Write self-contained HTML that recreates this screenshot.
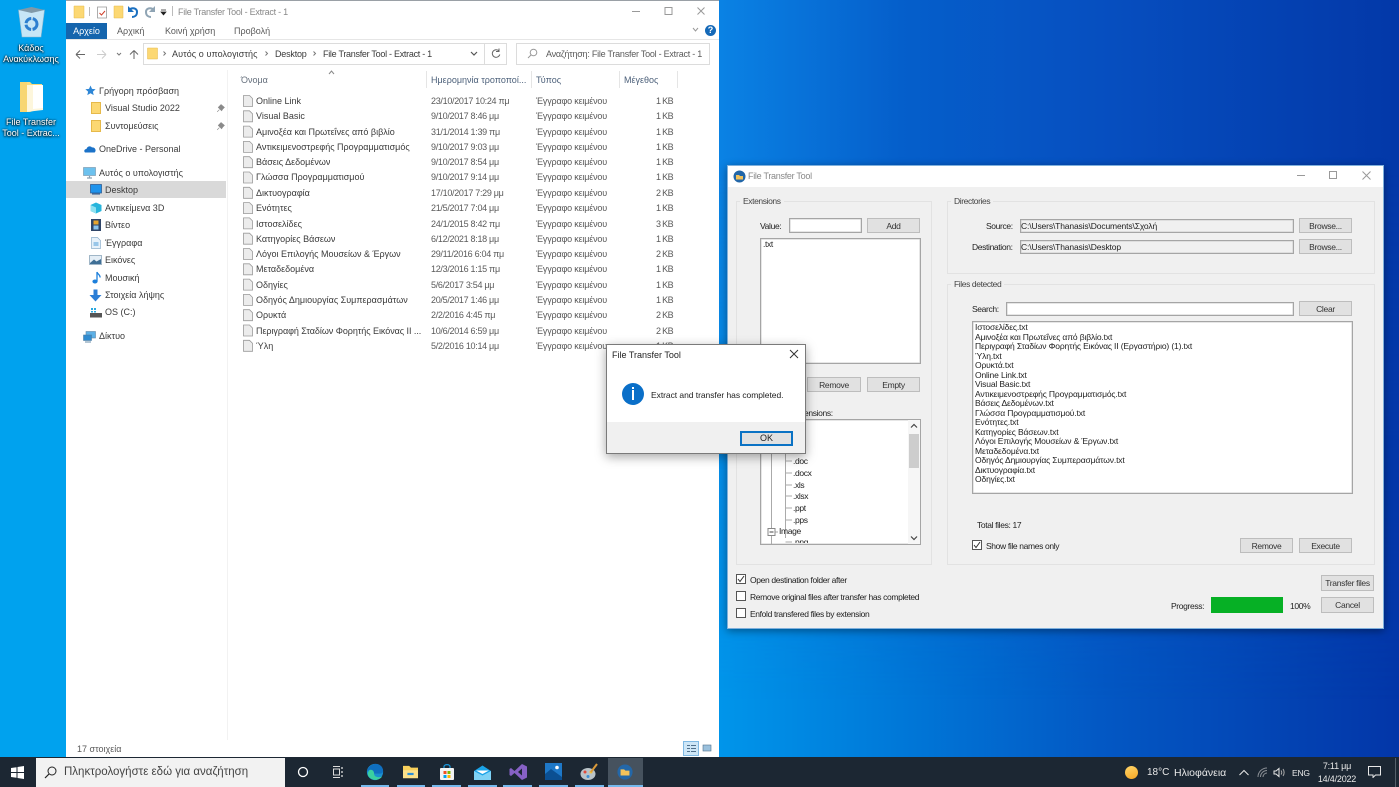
<!DOCTYPE html>
<html lang="el"><head><meta charset="utf-8"><title>File Transfer Tool</title>
<style>
*{box-sizing:border-box}
html{background:#0a5ac8}
html,body{margin:0;padding:0;width:1399px;height:787px;overflow:hidden}
body{position:relative;font-family:"Liberation Sans","Noto Sans CJK JP",sans-serif;font-size:9px;color:#3a3a3a;filter:blur(.3px)}
.a,.t,svg{position:absolute}
.t{white-space:nowrap;line-height:12px;height:12px}
#bg{left:0;top:0;width:1399px;height:787px;background:linear-gradient(90deg,#0098ec 0,#0095ea 720px,#0078d8 900px,#0358c4 1100px,#0336a8 1399px)}
#bg2{left:0;top:0;width:1399px;height:787px;background:linear-gradient(90deg,#0a82e4 720px,#055fcb 900px,#064fc0 1100px,#0338a8 1399px);-webkit-mask-image:linear-gradient(180deg,#000 0,#000 170px,transparent 700px);mask-image:linear-gradient(180deg,#000 0,#000 170px,transparent 700px)}
#bl{left:0;top:0;width:66px;height:757px;background:#00a2ee}
.g{color:#5a5a5a}
.g[style*="left:431"]{letter-spacing:-.3px}
.g[style*="left:536"]{letter-spacing:-.18px}
.g[style*="left:656"]{letter-spacing:-.45px;word-spacing:-.5px}
.b{background:#e1e1e1;border:1px solid #bdbdbd;text-align:center;color:#333;line-height:14px;font-size:8.500px;letter-spacing:-.3px}
.i{background:#fff;border:1px solid #a5a5a5;box-shadow:inset 0 0 0 .5px #ccc}
.gb{border:1px solid #e2e2e2}
.lg{background:#f0f0f0;padding:0 3px;color:#444;font-size:8.500px;letter-spacing:-.4px}
.cb{width:10px;height:10px;border:1px solid #555;background:#fff}
.d{color:#222;font-size:8.500px;letter-spacing:-.36px}
.l{letter-spacing:-.14px}
</style></head><body>
<div class="a" id="bg"></div>
<div class="a" id="bg2"></div>
<div class="a" id="bl"></div>

<!-- Desktop icons -->
<svg style="left:17px;top:6px" width="29" height="32" viewBox="0 0 29 32"><path d="M1.500 4 L27.500 4 L24 31 L5 31Z" fill="#c6e6f6" stroke="#8fb8d0" stroke-width=".6"/><path d="M1.500 4 L14.500 1 L27.500 4 L14.500 7Z" fill="#7f99a8"/><circle cx="14.500" cy="18" r="5.500" fill="none" stroke="#2d7fd0" stroke-width="3" stroke-dasharray="7.500 1.500"/></svg>
<div class="t" style="left:0;width:62px;top:43px;text-align:center;color:#fff;text-shadow:0 1px 2px #000,0 0 2px #000;line-height:11px;height:24px;white-space:normal;font-size:9px">Κάδος Ανακύκλωσης</div>
<svg style="left:19px;top:81px" width="25" height="32" viewBox="0 0 25 32"><path d="M1 1H11L13 3H23V27L11 31H1Z" fill="#f8dc82"/><path d="M7 4H24V29L7 31Z" fill="#fdf6dc"/><path d="M14 4H24V27L14 28Z" fill="#fff"/><path d="M1 1H8V31H1Z" fill="#f7d672"/></svg>
<div class="t" style="left:0;width:62px;top:117px;text-align:center;color:#fff;text-shadow:0 1px 2px #000,0 0 2px #000;line-height:10.500px;height:24px;white-space:normal;font-size:9px">File Transfer Tool - Extrac...</div>

<!-- Explorer window -->
<div class="a" style="left:66px;top:0;width:653px;height:757px;background:#fff"></div>
<div class="a" style="left:66px;top:0;width:653px;height:1px;background:#9aa0a6"></div>
<svg style="left:73px;top:5px" width="12" height="14" viewBox="0 0 12 14"><path d="M1 1H11V13H1Z" fill="#fcd873" stroke="#e6b94a" stroke-width=".5"/></svg>
<div class="a" style="left:89px;top:7px;width:1px;height:9px;background:#bbb"></div>
<svg style="left:96px;top:5px" width="12" height="14" viewBox="0 0 12 14"><path d="M1.500 2H10.500V13H1.500Z" fill="#fff" stroke="#999" stroke-width=".8"/><path d="M3.500 8l2 2 3.500-4" stroke="#d0402c" fill="none"/></svg>
<svg style="left:113px;top:5px" width="11" height="14" viewBox="0 0 11 14"><path d="M1 1H10V13H1Z" fill="#fcd873" stroke="#e6b94a" stroke-width=".5"/></svg>
<svg style="left:127px;top:5px" width="12" height="13" viewBox="0 0 12 13"><path d="M2 5c3-3 8-2 8 2s-3 5-5 5" stroke="#1a6fc0" stroke-width="2" fill="none"/><path d="M1 1v6h6" fill="#1a6fc0"/></svg>
<svg style="left:144px;top:5px" width="12" height="13" viewBox="0 0 12 13"><path d="M10 5C7 2 2 3 2 7s3 5 5 5" stroke="#8fa4b4" stroke-width="2" fill="none"/><path d="M11 1v6H5" fill="#8fa4b4"/></svg>
<svg style="left:160px;top:9px" width="7" height="7" viewBox="0 0 7 7"><path d="M1 1H6M1 3L3.500 6L6 3Z" stroke="#222" fill="#222" stroke-width=".7"/></svg>
<div class="a" style="left:172px;top:6px;width:1px;height:10px;background:#bbb"></div>
<div class="t" style="left:178px;top:6px;color:#888;letter-spacing:-.25px">File Transfer Tool - Extract - 1</div>
<svg style="left:632px;top:6px" width="76" height="11" viewBox="0 0 76 11"><path d="M0 5.500H8" stroke="#999"/><rect x="33" y="1.500" width="7" height="7" fill="none" stroke="#999"/><path d="M65.500 1.500l7 7m0-7l-7 7" stroke="#999"/></svg>

<!-- Ribbon -->
<div class="a" style="left:66px;top:23px;width:41px;height:16px;background:#1565ad;color:#fff;text-align:center;line-height:16px">Αρχείο</div>
<div class="t g" style="left:117px;top:25px">Αρχική</div>
<div class="t g" style="left:165px;top:25px">Κοινή χρήση</div>
<div class="t g" style="left:234px;top:25px">Προβολή</div>
<div class="a" style="left:66px;top:39px;width:653px;height:1px;background:#e6e6e6"></div>
<svg style="left:692px;top:27px" width="7" height="6" viewBox="0 0 7 6"><path d="M1 1l2.500 3L6 1" stroke="#999" fill="none"/></svg>
<div class="a" style="left:705px;top:25px;width:11px;height:11px;border-radius:50%;background:#1569b8;color:#fff;font:bold 9px/11px 'Liberation Sans',sans-serif;text-align:center">?</div>

<!-- Nav bar -->
<svg style="left:75px;top:49px" width="66" height="11" viewBox="0 0 66 11"><path d="M1 5.500H10M1 5.500l4-4M1 5.500l4 4" stroke="#666" fill="none"/><path d="M31 5.500H22M31 5.500l-4-4M31 5.500l-4 4" stroke="#ccc" fill="none"/><path d="M42 4l2 2 2-2" stroke="#777" fill="none"/><path d="M59 10V1.500M59 1.500l-4 4M59 1.500l4 4" stroke="#666" fill="none"/></svg>
<div class="a" style="left:143px;top:43px;width:364px;height:22px;border:1px solid #dcdcdc"></div>
<div class="a" style="left:484px;top:43px;width:1px;height:22px;background:#dcdcdc"></div>
<svg style="left:147px;top:47px" width="11" height="13" viewBox="0 0 11 13"><path d="M.5 1H10.500V12H.5Z" fill="#fcd873" stroke="#e6b94a" stroke-width=".5"/></svg>
<svg style="left:163px;top:51px" width="110" height="6" viewBox="0 0 110 6"><path d="M.5 .5l2 2-2 2M102.500 .5l2 2-2 2" stroke="#777" fill="none"/></svg>
<svg style="left:313px;top:51px" width="4" height="6" viewBox="0 0 4 6"><path d="M.5 .5l2 2-2 2" stroke="#777" fill="none"/></svg>
<div class="t" style="left:172px;top:48px;letter-spacing:.08px">Αυτός ο υπολογιστής</div>
<div class="t" style="left:275px;top:48px;letter-spacing:-.2px">Desktop</div>
<div class="t" style="left:323px;top:48px;letter-spacing:-.28px">File Transfer Tool - Extract - 1</div>
<svg style="left:470px;top:51px" width="8" height="6" viewBox="0 0 8 6"><path d="M1 1l3 3 3-3" stroke="#555" stroke-width="1.200" fill="none"/></svg>
<svg style="left:491px;top:48px" width="10" height="11" viewBox="0 0 10 11"><path d="M8 3A3.800 3.800 0 1 0 8.800 6.500M8 .5V3.500H5" stroke="#666" fill="none"/></svg>
<div class="a" style="left:516px;top:43px;width:194px;height:22px;border:1px solid #dcdcdc"></div>
<svg style="left:527px;top:48px" width="11" height="11" viewBox="0 0 11 11"><circle cx="6.500" cy="4.500" r="3.300" fill="none" stroke="#999"/><path d="M4 7L1 10" stroke="#999"/></svg>
<div class="t g" style="left:546px;top:48px;letter-spacing:-.24px">Αναζήτηση: File Transfer Tool - Extract - 1</div>

<!-- Column headers -->
<svg style="left:328px;top:70px" width="7" height="5" viewBox="0 0 7 5"><path d="M1 4l2.500-3L6 4" stroke="#888" fill="none"/></svg>
<div class="t" style="left:241px;top:74px;color:#66707d">Όνομα</div>
<div class="t" style="left:431px;top:74px;color:#4c607a">Ημερομηνία τροποποί...</div>
<div class="t" style="left:536px;top:74px;color:#4c607a">Τύπος</div>
<div class="t" style="left:624px;top:74px;color:#4c607a">Μέγεθος</div>
<div class="a" style="left:426px;top:71px;width:1px;height:17px;background:#e5e5e5"></div>
<div class="a" style="left:531px;top:71px;width:1px;height:17px;background:#e5e5e5"></div>
<div class="a" style="left:619px;top:71px;width:1px;height:17px;background:#e5e5e5"></div>
<div class="a" style="left:677px;top:71px;width:1px;height:17px;background:#e5e5e5"></div>
<div class="a" style="left:227px;top:70px;width:1px;height:670px;background:#f2f2f2"></div>

<!-- Nav pane -->
<div class="a" style="left:66px;top:181px;width:160px;height:17px;background:#d9d9d9"></div>
<svg style="left:85px;top:85px" width="11" height="11" viewBox="0 0 11 11"><path d="M5.500 .5l1.500 3.400 3.600.3-2.700 2.400.8 3.500-3.200-1.900-3.200 1.900.8-3.500L.4 4.200 4 3.900Z" fill="#2d86d6"/></svg>
<div class="t" style="left:99px;top:85px">Γρήγορη πρόσβαση</div>
<div class="a" style="left:91px;top:102px;width:10px;height:12px;background:#fcd873;border:.5px solid #e6b94a"></div>
<div class="t" style="left:105px;top:102px">Visual Studio 2022</div>
<div class="a" style="left:91px;top:120px;width:10px;height:12px;background:#fcd873;border:.5px solid #e6b94a"></div>
<div class="t" style="left:105px;top:120px">Συντομεύσεις</div>
<svg style="left:216px;top:104px" width="9" height="9" viewBox="0 0 8 8"><path d="M1 7l2-2M2 3l3 3 1-1.500 1.500-1.500L4.500.5 3 2Z" fill="#8a8a8a" stroke="#8a8a8a" stroke-width=".5"/></svg>
<svg style="left:216px;top:122px" width="9" height="9" viewBox="0 0 8 8"><path d="M1 7l2-2M2 3l3 3 1-1.500 1.500-1.500L4.500.5 3 2Z" fill="#8a8a8a" stroke="#8a8a8a" stroke-width=".5"/></svg>
<svg style="left:84px;top:145px" width="12" height="8" viewBox="0 0 12 8"><path d="M1 7.500C-.5 6 .5 4 2.500 4 3 1.500 6.500 .5 8 2.500c2-.5 4 1.500 3.500 3.500S10 7.500 10 7.500Z" fill="#1b72c8"/></svg>
<div class="t" style="left:99px;top:143px">OneDrive - Personal</div>
<svg style="left:83px;top:167px" width="13" height="12" viewBox="0 0 13 12"><rect x=".5" y=".5" width="12" height="8" fill="#6cc1ee" stroke="#7e9cb2" stroke-width=".7"/><path d="M4 11H9M6.500 9v2" stroke="#8aa0b2" stroke-width="1.200"/></svg>
<div class="t" style="left:99px;top:167px">Αυτός ο υπολογιστής</div>
<svg style="left:90px;top:184px" width="12" height="11" viewBox="0 0 12 11"><rect x=".5" y=".5" width="11" height="8.500" fill="#1f93ec" stroke="#24528a" stroke-width=".7"/><path d="M2 10H10" stroke="#24528a"/></svg>
<div class="t" style="left:105px;top:184px">Desktop</div>
<svg style="left:90px;top:202px" width="12" height="12" viewBox="0 0 12 12"><path d="M6 .5L11.500 3V9L6 11.500.5 9V3Z" fill="#27b5dc"/><path d="M6 5.500V11.500L.5 9V3Z" fill="#8fe1f0"/></svg>
<div class="t" style="left:105px;top:202px">Αντικείμενα 3D</div>
<svg style="left:91px;top:219px" width="10" height="12" viewBox="0 0 10 12"><rect width="10" height="12" fill="#2f4568"/><rect x="2.500" y="1.500" width="5" height="4" fill="#e7a52e"/><rect x="2.500" y="6.500" width="5" height="4" fill="#89c3ee"/></svg>
<div class="t" style="left:105px;top:219px">Βίντεο</div>
<svg style="left:91px;top:237px" width="10" height="12" viewBox="0 0 10 12"><path d="M.5 .5H6.500L9.500 3.500V11.500H.5Z" fill="#e6f1fa" stroke="#8fb0cc" stroke-width=".7"/><path d="M2.500 6H7.500M2.500 8H7.500" stroke="#4b9bd8"/></svg>
<div class="t" style="left:105px;top:237px">Έγγραφα</div>
<svg style="left:89px;top:255px" width="13" height="10" viewBox="0 0 13 10"><rect x=".5" y=".5" width="12" height="9" fill="#e4eef6" stroke="#7e9cb2" stroke-width=".7"/><path d="M1 8L5 4.500 7.500 6.500 12 4V9H1Z" fill="#3f6f96"/></svg>
<div class="t" style="left:105px;top:254px">Εικόνες</div>
<svg style="left:92px;top:271px" width="9" height="13" viewBox="0 0 9 13"><ellipse cx="3" cy="10.500" rx="2.600" ry="2" fill="#1c7fdb"/><path d="M5 10.500V1C5.500 3.500 8.500 3.500 8 6.500" stroke="#1c7fdb" stroke-width="1.300" fill="none"/></svg>
<div class="t" style="left:105px;top:272px">Μουσική</div>
<svg style="left:89px;top:289px" width="13" height="13" viewBox="0 0 13 13"><path d="M4.500 .5H8.500V6H12.500L6.500 12.500.5 6H4.500Z" fill="#2c7ed6"/></svg>
<div class="t" style="left:105px;top:289px">Στοιχεία λήψης</div>
<svg style="left:90px;top:307px" width="12" height="11" viewBox="0 0 12 11"><rect y="6" width="12" height="4.500" fill="#555"/><path d="M1 1h2v2H1zM4 1h2v2H4zM1 4h2v1.500H1zM4 4h2v1.500H4z" fill="#29a8e0"/></svg>
<div class="t" style="left:105px;top:306px">OS (C:)</div>
<svg style="left:83px;top:331px" width="13" height="12" viewBox="0 0 13 12"><rect x="3" y=".5" width="9.500" height="6.500" fill="#5cb0e6" stroke="#5b87a8" stroke-width=".6"/><rect x=".5" y="4" width="8" height="5.500" fill="#2f8bd0" stroke="#4f7ea2" stroke-width=".6"/><path d="M2 11H8" stroke="#6a8ea8"/></svg>
<div class="t" style="left:99px;top:330px">Δίκτυο</div>

<!-- File rows: icons -->
<svg style="left:243px;top:95px" width="10" height="258" viewBox="0 0 10 258" fill="#ececec" stroke="#9a9a9a" stroke-width=".8">
<path d="M.5.5H6.500L9.500 3.500V11.500H.5Z"/>
<path d="M.5 15.800H6.500L9.500 18.800V26.800H.5Z"/><path d="M.5 31.100H6.500L9.500 34.100V42.100H.5Z"/><path d="M.5 46.400H6.500L9.500 49.400V57.400H.5Z"/><path d="M.5 61.700H6.500L9.500 64.700V72.700H.5Z"/><path d="M.5 77H6.500L9.500 80V88H.5Z"/><path d="M.5 92.300H6.500L9.500 95.300V103.300H.5Z"/><path d="M.5 107.600H6.500L9.500 110.600V118.600H.5Z"/><path d="M.5 122.900H6.500L9.500 125.900V133.900H.5Z"/><path d="M.5 138.200H6.500L9.500 141.200V149.200H.5Z"/><path d="M.5 153.500H6.500L9.500 156.500V164.500H.5Z"/><path d="M.5 168.800H6.500L9.500 171.800V179.800H.5Z"/><path d="M.5 184.100H6.500L9.500 187.100V195.100H.5Z"/><path d="M.5 199.400H6.500L9.500 202.400V210.400H.5Z"/><path d="M.5 214.700H6.500L9.500 217.700V225.700H.5Z"/><path d="M.5 230H6.500L9.500 233V241H.5Z"/><path d="M.5 245.300H6.500L9.500 248.300V256.300H.5Z"/>
</svg>

<!-- File rows: text -->
<div class="t" style="left:256px;top:95px">Online Link</div><div class="t g" style="left:431px;top:95px">23/10/2017 10:24 πμ</div><div class="t g" style="left:536px;top:95px">Έγγραφο κειμένου</div><div class="t g" style="left:656px;top:95px">1 KB</div>
<div class="t" style="left:256px;top:110px">Visual Basic</div><div class="t g" style="left:431px;top:110px">9/10/2017 8:46 μμ</div><div class="t g" style="left:536px;top:110px">Έγγραφο κειμένου</div><div class="t g" style="left:656px;top:110px">1 KB</div>
<div class="t" style="left:256px;top:126px">Αμινοξέα και Πρωτεΐνες από βιβλίο</div><div class="t g" style="left:431px;top:126px">31/1/2014 1:39 πμ</div><div class="t g" style="left:536px;top:126px">Έγγραφο κειμένου</div><div class="t g" style="left:656px;top:126px">1 KB</div>
<div class="t" style="left:256px;top:141px">Αντικειμενοστρεφής Προγραμματισμός</div><div class="t g" style="left:431px;top:141px">9/10/2017 9:03 μμ</div><div class="t g" style="left:536px;top:141px">Έγγραφο κειμένου</div><div class="t g" style="left:656px;top:141px">1 KB</div>
<div class="t" style="left:256px;top:156px">Βάσεις Δεδομένων</div><div class="t g" style="left:431px;top:156px">9/10/2017 8:54 μμ</div><div class="t g" style="left:536px;top:156px">Έγγραφο κειμένου</div><div class="t g" style="left:656px;top:156px">1 KB</div>
<div class="t" style="left:256px;top:171px">Γλώσσα Προγραμματισμού</div><div class="t g" style="left:431px;top:171px">9/10/2017 9:14 μμ</div><div class="t g" style="left:536px;top:171px">Έγγραφο κειμένου</div><div class="t g" style="left:656px;top:171px">1 KB</div>
<div class="t" style="left:256px;top:187px">Δικτυογραφία</div><div class="t g" style="left:431px;top:187px">17/10/2017 7:29 μμ</div><div class="t g" style="left:536px;top:187px">Έγγραφο κειμένου</div><div class="t g" style="left:656px;top:187px">2 KB</div>
<div class="t" style="left:256px;top:202px">Ενότητες</div><div class="t g" style="left:431px;top:202px">21/5/2017 7:04 μμ</div><div class="t g" style="left:536px;top:202px">Έγγραφο κειμένου</div><div class="t g" style="left:656px;top:202px">1 KB</div>
<div class="t" style="left:256px;top:218px">Ιστοσελίδες</div><div class="t g" style="left:431px;top:218px">24/1/2015 8:42 πμ</div><div class="t g" style="left:536px;top:218px">Έγγραφο κειμένου</div><div class="t g" style="left:656px;top:218px">3 KB</div>
<div class="t" style="left:256px;top:233px">Κατηγορίες Βάσεων</div><div class="t g" style="left:431px;top:233px">6/12/2021 8:18 μμ</div><div class="t g" style="left:536px;top:233px">Έγγραφο κειμένου</div><div class="t g" style="left:656px;top:233px">1 KB</div>
<div class="t" style="left:256px;top:248px">Λόγοι Επιλογής Μουσείων &amp; Έργων</div><div class="t g" style="left:431px;top:248px">29/11/2016 6:04 πμ</div><div class="t g" style="left:536px;top:248px">Έγγραφο κειμένου</div><div class="t g" style="left:656px;top:248px">2 KB</div>
<div class="t" style="left:256px;top:263px">Μεταδεδομένα</div><div class="t g" style="left:431px;top:263px">12/3/2016 1:15 πμ</div><div class="t g" style="left:536px;top:263px">Έγγραφο κειμένου</div><div class="t g" style="left:656px;top:263px">1 KB</div>
<div class="t" style="left:256px;top:279px">Οδηγίες</div><div class="t g" style="left:431px;top:279px">5/6/2017 3:54 μμ</div><div class="t g" style="left:536px;top:279px">Έγγραφο κειμένου</div><div class="t g" style="left:656px;top:279px">1 KB</div>
<div class="t" style="left:256px;top:294px">Οδηγός Δημιουργίας Συμπερασμάτων</div><div class="t g" style="left:431px;top:294px">20/5/2017 1:46 μμ</div><div class="t g" style="left:536px;top:294px">Έγγραφο κειμένου</div><div class="t g" style="left:656px;top:294px">1 KB</div>
<div class="t" style="left:256px;top:309px">Ορυκτά</div><div class="t g" style="left:431px;top:309px">2/2/2016 4:45 πμ</div><div class="t g" style="left:536px;top:309px">Έγγραφο κειμένου</div><div class="t g" style="left:656px;top:309px">2 KB</div>
<div class="t" style="left:256px;top:325px;letter-spacing:-.05px">Περιγραφή Σταδίων Φορητής Εικόνας ΙΙ ...</div><div class="t g" style="left:431px;top:325px">10/6/2014 6:59 μμ</div><div class="t g" style="left:536px;top:325px">Έγγραφο κειμένου</div><div class="t g" style="left:656px;top:325px">2 KB</div>
<div class="t" style="left:256px;top:340px">Ύλη</div><div class="t g" style="left:431px;top:340px">5/2/2016 10:14 μμ</div><div class="t g" style="left:536px;top:340px">Έγγραφο κειμένου</div><div class="t g" style="left:656px;top:340px">1 KB</div>

<!-- Status bar -->
<div class="t g" style="left:77px;top:743px">17 στοιχεία</div>
<div class="a" style="left:683px;top:741px;width:16px;height:15px;background:#cde6f7;border:1px solid #7fb9e4"></div>
<svg style="left:686px;top:744px" width="26" height="9" viewBox="0 0 26 9"><path d="M1 1.500H4M5 1.500H10M1 4.500H4M5 4.500H10M1 7.500H4M5 7.500H10" stroke="#50708c"/><rect x="17" y="1" width="8" height="6" fill="#9ac0dc" stroke="#50708c" stroke-width=".6"/></svg>

<!-- Transfer tool window -->
<div class="a" style="left:727px;top:165px;width:657px;height:464px;background:#f0f0f0;border:1px solid #7fb0dc;box-shadow:0 2px 8px rgba(0,0,0,.4)"></div>
<div class="a" style="left:728px;top:166px;width:655px;height:21px;background:#fff"></div>
<svg style="left:733px;top:170px" width="13" height="13" viewBox="0 0 13 13"><circle cx="6.500" cy="6.500" r="6" fill="#2367a8"/><path d="M3 5H6L7 6H10V9.500H3Z" fill="#f3c25a"/></svg>
<div class="t" style="left:748px;top:170px;color:#888;letter-spacing:-.28px">File Transfer Tool</div>
<svg style="left:1297px;top:170px" width="78" height="11" viewBox="0 0 78 11"><path d="M0 5.500H8" stroke="#999"/><rect x="32.500" y="1.500" width="7" height="7" fill="none" stroke="#999"/><path d="M65.500 1.500l8 8m0-8l-8 8" stroke="#999"/></svg>

<!-- Extensions group -->
<div class="a gb" style="left:736px;top:201px;width:196px;height:364px"></div>
<div class="t lg" style="left:740px;top:195px">Extensions</div>
<div class="t d" style="left:760px;top:220px">Value:</div>
<div class="a i" style="left:789px;top:218px;width:73px;height:15px"></div>
<div class="a b" style="left:867px;top:218px;width:53px;height:15px">Add</div>
<div class="a i" style="left:760px;top:238px;width:161px;height:126px"></div>
<div class="t d" style="left:763px;top:238px">.txt</div>
<div class="a b" style="left:807px;top:377px;width:54px;height:15px">Remove</div>
<div class="a b" style="left:867px;top:377px;width:53px;height:15px">Empty</div>
<div class="t d" style="left:804px;top:407px">ensions:</div>
<div class="a i" style="left:760px;top:419px;width:161px;height:126px;overflow:hidden">
  <div class="a" style="left:147px;top:0;width:12px;height:124px;background:#f6f6f6"></div>
  <div class="a" style="left:148px;top:14px;width:10px;height:34px;background:#cdcdcd"></div>
</div>
<svg style="left:910px;top:423px" width="8" height="6" viewBox="0 0 8 6"><path d="M1 4.500L4 1.500 7 4.500" stroke="#444" stroke-width="1.200" fill="none"/></svg>
<svg style="left:910px;top:535px" width="8" height="6" viewBox="0 0 8 6"><path d="M1 1.500L4 4.500 7 1.500" stroke="#444" stroke-width="1.200" fill="none"/></svg>
<svg style="left:766px;top:441px" width="30" height="103" viewBox="0 0 30 103" stroke="#aaa" fill="none"><path d="M19.500 0V97M19.500 20H26M19.500 32H26M19.500 44H26M19.500 55H26M19.500 67H26M19.500 79H26M5.500 0V103M5.500 91H12M19.500 101H26"/><rect x="2" y="87.500" width="7" height="7" fill="#fff" stroke="#888"/><path d="M3.500 91H7.500" stroke="#444"/></svg>
<div class="t d" style="left:793px;top:455px">.doc</div>
<div class="t d" style="left:793px;top:467px">.docx</div>
<div class="t d" style="left:793px;top:479px">.xls</div>
<div class="t d" style="left:793px;top:490px">.xlsx</div>
<div class="t d" style="left:793px;top:502px">.ppt</div>
<div class="t d" style="left:793px;top:514px">.pps</div>
<div class="t d" style="left:779px;top:525px">Image</div>
<div class="t d" style="left:793px;top:535px;height:8px;overflow:hidden;line-height:14px">.png</div>

<!-- Directories -->
<div class="a gb" style="left:947px;top:201px;width:428px;height:73px"></div>
<div class="t lg" style="left:951px;top:195px">Directories</div>
<div class="t d" style="left:986px;top:220px">Source:</div>
<div class="a i" style="left:1020px;top:219px;width:274px;height:14px;background:#f0f0f0"></div>
<div class="t d l" style="left:1021px;top:220px">C:\Users\Thanasis\Documents\Σχολή</div>
<div class="a b" style="left:1299px;top:218px;width:53px;height:15px">Browse...</div>
<div class="t d" style="left:972px;top:241px">Destination:</div>
<div class="a i" style="left:1020px;top:240px;width:274px;height:14px;background:#f0f0f0"></div>
<div class="t d l" style="left:1021px;top:241px">C:\Users\Thanasis\Desktop</div>
<div class="a b" style="left:1299px;top:239px;width:53px;height:15px">Browse...</div>

<!-- Files detected -->
<div class="a gb" style="left:947px;top:284px;width:428px;height:281px"></div>
<div class="t lg" style="left:951px;top:278px">Files detected</div>
<div class="t d" style="left:972px;top:303px">Search:</div>
<div class="a i" style="left:1006px;top:302px;width:288px;height:14px"></div>
<div class="a b" style="left:1299px;top:301px;width:53px;height:15px">Clear</div>
<div class="a i" style="left:972px;top:321px;width:381px;height:173px"></div>
<div class="t d l" style="left:975px;top:321px">Ιστοσελίδες.txt</div>
<div class="t d l" style="left:975px;top:331px">Αμινοξέα και Πρωτεΐνες από βιβλίο.txt</div>
<div class="t d l" style="left:975px;top:340px">Περιγραφή Σταδίων Φορητής Εικόνας ΙΙ (Εργαστήριο) (1).txt</div>
<div class="t d l" style="left:975px;top:350px">Ύλη.txt</div>
<div class="t d l" style="left:975px;top:359px">Ορυκτά.txt</div>
<div class="t d l" style="left:975px;top:369px">Online Link.txt</div>
<div class="t d l" style="left:975px;top:378px">Visual Basic.txt</div>
<div class="t d l" style="left:975px;top:388px">Αντικειμενοστρεφής Προγραμματισμός.txt</div>
<div class="t d l" style="left:975px;top:397px">Βάσεις Δεδομένων.txt</div>
<div class="t d l" style="left:975px;top:407px">Γλώσσα Προγραμματισμού.txt</div>
<div class="t d l" style="left:975px;top:416px">Ενότητες.txt</div>
<div class="t d l" style="left:975px;top:426px">Κατηγορίες Βάσεων.txt</div>
<div class="t d l" style="left:975px;top:435px">Λόγοι Επιλογής Μουσείων &amp; Έργων.txt</div>
<div class="t d l" style="left:975px;top:445px">Μεταδεδομένα.txt</div>
<div class="t d l" style="left:975px;top:454px">Οδηγός Δημιουργίας Συμπερασμάτων.txt</div>
<div class="t d l" style="left:975px;top:464px">Δικτυογραφία.txt</div>
<div class="t d l" style="left:975px;top:473px">Οδηγίες.txt</div>
<div class="t d" style="left:977px;top:519px">Total files: 17</div>
<div class="a cb" style="left:972px;top:540px"></div>
<svg style="left:973px;top:541px" width="8" height="8" viewBox="0 0 8 8"><path d="M1 4l2 2.500L7 1" stroke="#333" fill="none"/></svg>
<div class="t d" style="left:986px;top:540px">Show file names only</div>
<div class="a b" style="left:1240px;top:538px;width:53px;height:15px">Remove</div>
<div class="a b" style="left:1299px;top:538px;width:53px;height:15px">Execute</div>

<!-- Bottom options -->
<div class="a cb" style="left:736px;top:574px"></div>
<svg style="left:737px;top:575px" width="8" height="8" viewBox="0 0 8 8"><path d="M1 4l2 2.500L7 1" stroke="#333" fill="none"/></svg>
<div class="t d" style="left:750px;top:574px">Open destination folder after</div>
<div class="a cb" style="left:736px;top:591px"></div>
<div class="t d" style="left:750px;top:591px">Remove original files after transfer has completed</div>
<div class="a cb" style="left:736px;top:608px"></div>
<div class="t d" style="left:750px;top:608px">Enfold transfered files by extension</div>
<div class="a b" style="left:1321px;top:575px;width:53px;height:16px">Transfer files</div>
<div class="t d" style="left:1171px;top:600px">Progress:</div>
<div class="a" style="left:1211px;top:597px;width:72px;height:16px;background:#06b025"></div>
<div class="t d" style="left:1290px;top:600px">100%</div>
<div class="a b" style="left:1321px;top:597px;width:53px;height:16px">Cancel</div>

<!-- Message dialog -->
<div class="a" style="left:606px;top:344px;width:200px;height:110px;background:#fff;border:1px solid #7a7a7a;box-shadow:0 3px 10px rgba(0,0,0,.35)"></div>
<div class="a" style="left:607px;top:422px;width:198px;height:31px;background:#f0f0f0"></div>
<div class="t" style="left:612px;top:349px;color:#222">File Transfer Tool</div>
<svg style="left:789px;top:349px" width="10" height="10" viewBox="0 0 10 10"><path d="M1 1l8 8m0-8L1 9" stroke="#333"/></svg>
<div class="a" style="left:622px;top:383px;width:22px;height:22px;border-radius:50%;background:#0a6fc8"></div>
<div class="a" style="left:632px;top:387px;width:2px;height:2px;background:#fff"></div>
<div class="a" style="left:632px;top:390px;width:2px;height:10px;background:#fff"></div>
<div class="t" style="left:651px;top:389px;color:#222;font-size:8.500px;letter-spacing:-.05px">Extract and transfer has completed.</div>
<div class="a" style="left:740px;top:431px;width:53px;height:15px;background:#e1e1e1;border:2px solid #0a72c4;text-align:center;line-height:11px;color:#222">OK</div>

<!-- Taskbar -->
<div class="a" style="left:0;top:757px;width:1399px;height:30px;background:#1c2733"></div>
<svg style="left:11px;top:766px" width="13" height="13" viewBox="0 0 13 13"><path d="M0 2L5.500 1.200V6H0ZM6.500 1L13 0V6H6.500ZM0 7H5.500V11.800L0 11ZM6.500 7H13V13L6.500 12Z" fill="#fff"/></svg>
<div class="a" style="left:36px;top:758px;width:249px;height:29px;background:#f2f2f2"></div>
<svg style="left:44px;top:766px" width="13" height="13" viewBox="0 0 13 13"><circle cx="8" cy="5" r="4" fill="none" stroke="#222"/><path d="M5 8L1 12" stroke="#222" stroke-width="1.200"/></svg>
<div class="t" style="left:64px;top:766px;font-size:11.500px;color:#444">Πληκτρολογήστε εδώ για αναζήτηση</div>
<svg style="left:297px;top:766px" width="12" height="12" viewBox="0 0 12 12"><circle cx="6" cy="6" r="4.500" fill="none" stroke="#fff" stroke-width="1.300"/></svg>
<svg style="left:332px;top:766px" width="13" height="12" viewBox="0 0 13 12"><path d="M1 .5H8M1 11.500H8" stroke="#ddd"/><rect x="1.500" y="3" width="6" height="6" fill="none" stroke="#ddd"/><path d="M10 1v2M10 5v2M10 9v2" stroke="#ddd" stroke-width="1.300"/></svg>
<div class="a" style="left:608px;top:758px;width:35px;height:29px;background:#46525e"></div>

<svg style="left:366px;top:763px" width="18" height="18" viewBox="0 0 20 20"><circle cx="10" cy="10" r="9" fill="#1a8fd0"/><path d="M2 12C3 6 10 3 15 6c3 2 3 6 0 6H9c0 3 4 5 9 3-3 4-9 5-13 2-2-1-3-3-3-5Z" fill="#3ad0a0"/><path d="M1 10C2 4 7 1 11 1c4 0 8 3 8 8 0 2-2 3-4 3H9C9 7 4 6 1 10Z" fill="#0f6fc0"/></svg>
<svg style="left:403px;top:764px" width="15" height="16" viewBox="0 0 17 16"><path d="M0 1H7L9 3H17V15H0Z" fill="#f8d05c"/><rect x="0" y="6" width="17" height="9" fill="#fbe08a"/><rect x="5" y="9" width="7" height="2.500" fill="#2b8fd8"/></svg>
<svg style="left:439px;top:764px" width="16" height="17" viewBox="0 0 16 17"><rect x="1" y="4" width="14" height="12" rx="1" fill="#f3f3f3"/><path d="M5 4V2.500C5 0 11 0 11 2.500V4" fill="none" stroke="#1a9be0" stroke-width="1.200"/><rect x="4.500" y="7" width="3" height="3" fill="#f25022"/><rect x="8.500" y="7" width="3" height="3" fill="#7fba00"/><rect x="4.500" y="11" width="3" height="3" fill="#00a4ef"/><rect x="8.500" y="11" width="3" height="3" fill="#ffb900"/></svg>
<svg style="left:474px;top:765px" width="17" height="15" viewBox="0 0 17 15"><path d="M0 6L8.500 .5 17 6V15H0Z" fill="#1aa3e8"/><path d="M0 6L8.500 10.500 17 6V15H0Z" fill="#7fd2f5"/><path d="M2 5.500L8.500 9 15 5.500" fill="#fff"/></svg>
<svg style="left:509px;top:763px" width="18" height="18" viewBox="0 0 18 18"><path d="M13 1L18 3.500V14.500L13 17 5.500 10 2 13 .5 12V6L2 5 5.500 8ZM13 5.500L9 9 13 12.500Z" fill="#8661c5"/></svg>
<svg style="left:545px;top:763px" width="17" height="17" viewBox="0 0 17 17"><rect width="17" height="17" fill="#1e78c8"/><path d="M0 17V11L6 6 17 14V17Z" fill="#0b4f92"/><circle cx="12" cy="4.500" r="1.800" fill="#fff"/></svg>
<svg style="left:580px;top:763px" width="19" height="18" viewBox="0 0 19 18"><ellipse cx="8" cy="11" rx="7.500" ry="6" fill="#b9c3c8"/><circle cx="5" cy="9" r="1.500" fill="#e24a3a"/><circle cx="8" cy="13.500" r="1.500" fill="#3b8fd6"/><circle cx="11" cy="9" r="1.500" fill="#f1c33c"/><path d="M17 1L11 9" stroke="#d99a3a" stroke-width="2"/></svg>
<svg style="left:617px;top:764px" width="16" height="16" viewBox="0 0 18 18"><circle cx="9" cy="9" r="8.500" fill="#2367a8"/><path d="M4 6H8L9.500 7.500H14V13H4Z" fill="#f3c25a"/></svg>

<div class="a" style="left:361px;top:785px;width:28px;height:2px;background:#76b9ed"></div>
<div class="a" style="left:397px;top:785px;width:28px;height:2px;background:#76b9ed"></div>
<div class="a" style="left:432px;top:785px;width:29px;height:2px;background:#76b9ed"></div>
<div class="a" style="left:468px;top:785px;width:29px;height:2px;background:#76b9ed"></div>
<div class="a" style="left:503px;top:785px;width:29px;height:2px;background:#76b9ed"></div>
<div class="a" style="left:539px;top:785px;width:29px;height:2px;background:#76b9ed"></div>
<div class="a" style="left:575px;top:785px;width:29px;height:2px;background:#76b9ed"></div>
<div class="a" style="left:608px;top:785px;width:35px;height:2px;background:#76b9ed"></div>

<!-- Tray -->
<div class="a" style="left:1125px;top:766px;width:13px;height:13px;border-radius:50%;background:linear-gradient(160deg,#ffd66b,#f5a623)"></div>
<div class="t" style="left:1147px;top:767px;color:#e8e8e8;font-size:10px">18°C</div>
<div class="t" style="left:1174px;top:767px;color:#e8e8e8;font-size:10.500px">Ηλιοφάνεια</div>
<svg style="left:1239px;top:769px" width="10" height="7" viewBox="0 0 10 7"><path d="M.5 6L5 1.500 9.500 6" stroke="#e8e8e8" fill="none"/></svg>
<svg style="left:1257px;top:767px" width="11" height="11" viewBox="0 0 11 11"><path d="M1 10A9 9 0 0 1 10 1M3.500 10A6.500 6.500 0 0 1 10 3.500M6 10A4 4 0 0 1 10 6" stroke="#8a8f95" fill="none"/></svg>
<svg style="left:1273px;top:767px" width="12" height="11" viewBox="0 0 12 11"><path d="M1 4H3L6 1.500V9.500L3 7H1Z" fill="none" stroke="#e8e8e8"/><path d="M8 3.500C9 4.500 9 6.500 8 7.500M10 2C11.500 4 11.500 7 10 9" stroke="#aaa" fill="none"/></svg>
<div class="t" style="left:1292px;top:767px;color:#e8e8e8;font-size:8.500px;letter-spacing:-.2px">ENG</div>
<div class="t" style="left:1312px;top:760px;width:50px;text-align:center;color:#e8e8e8;letter-spacing:-.2px">7:11 μμ</div>
<div class="t" style="left:1312px;top:773px;width:50px;text-align:center;color:#e8e8e8;letter-spacing:-.2px">14/4/2022</div>
<svg style="left:1368px;top:766px" width="13" height="12" viewBox="0 0 13 12"><path d="M.5.5H12.500V9H7.500L5 11.500V9H.5Z" fill="none" stroke="#e8e8e8"/></svg>
<div class="a" style="left:1395px;top:758px;width:1px;height:29px;background:#55606a"></div>
</body></html>
